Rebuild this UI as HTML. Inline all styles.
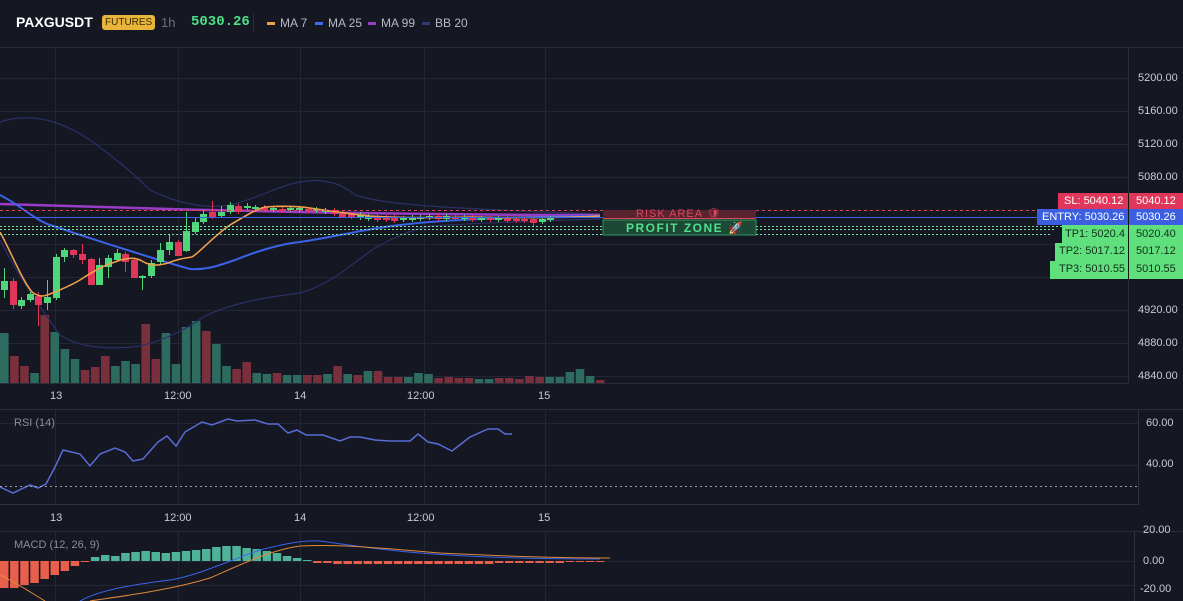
<!DOCTYPE html>
<html><head><meta charset="utf-8"><style>
html,body{margin:0;padding:0;background:#151722;width:1183px;height:601px;overflow:hidden;font-family:"Liberation Sans",sans-serif;}
.t{position:absolute;white-space:nowrap}
</style></head><body>
<div style="position:relative;width:1183px;height:601px">
<div class="t" style="left:16px;top:14px;color:#fff;font-weight:bold;font-size:14px">PAXGUSDT</div>
<div class="t" style="left:102px;top:15px;background:#e8b53a;color:#3a2a00;font-size:10px;padding:2px 3px;border-radius:3px">FUTURES</div>
<div class="t" style="left:161px;top:15px;color:#6b6f7c;font-size:13px">1h</div>
<div class="t" style="left:191px;top:14px;color:#4ee08a;font-weight:bold;font-size:14px;font-family:'Liberation Mono',monospace">5030.26</div>
<div class="t" style="left:253px;top:14px;width:1px;height:18px;background:#2a2e3a"></div>
<div class="t" style="left:267px;top:16px;color:#b6bac4;font-size:12px"><span style="display:inline-block;width:8px;height:3px;background:#f0a04b;vertical-align:middle;margin-right:5px"></span>MA 7</div>
<div class="t" style="left:315px;top:16px;color:#b6bac4;font-size:12px"><span style="display:inline-block;width:8px;height:3px;background:#3c6cf0;vertical-align:middle;margin-right:5px"></span>MA 25</div>
<div class="t" style="left:368px;top:16px;color:#b6bac4;font-size:12px"><span style="display:inline-block;width:8px;height:3px;background:#9a3cc8;vertical-align:middle;margin-right:5px"></span>MA 99</div>
<div class="t" style="left:422px;top:16px;color:#b6bac4;font-size:12px"><span style="display:inline-block;width:8px;height:3px;background:#2f3a7a;vertical-align:middle;margin-right:5px"></span>BB 20</div>

<svg id="s" width="1183" height="601" style="position:absolute;left:0;top:0" xmlns="http://www.w3.org/2000/svg">
<g stroke="#232633" stroke-width="1">
<line x1="0" y1="47.5" x2="1183" y2="47.5" stroke="#262a36"/>
<line x1="0" y1="78.5" x2="1128" y2="78.5"/><line x1="0" y1="111.5" x2="1128" y2="111.5"/><line x1="0" y1="144.5" x2="1128" y2="144.5"/><line x1="0" y1="177.5" x2="1128" y2="177.5"/>
<line x1="0" y1="244.5" x2="1128" y2="244.5"/><line x1="0" y1="277.5" x2="1128" y2="277.5"/><line x1="0" y1="310.5" x2="1128" y2="310.5"/><line x1="0" y1="343.5" x2="1128" y2="343.5"/><line x1="0" y1="376.5" x2="1128" y2="376.5"/>
<line x1="55.5" y1="48" x2="55.5" y2="383"/><line x1="178.5" y1="48" x2="178.5" y2="383"/><line x1="300.5" y1="48" x2="300.5" y2="383"/><line x1="424.5" y1="48" x2="424.5" y2="383"/><line x1="545.5" y1="48" x2="545.5" y2="383"/>
<line x1="1128.5" y1="48" x2="1128.5" y2="383" stroke="#2a2e3a"/>
<line x1="0" y1="383.5" x2="1128" y2="383.5" stroke="#2a2e3a"/>
<line x1="0" y1="409.5" x2="1183" y2="409.5" stroke="#2a2e3a"/>
<line x1="0" y1="423.5" x2="1138" y2="423.5"/><line x1="0" y1="465.5" x2="1138" y2="465.5"/>
<line x1="55.5" y1="410" x2="55.5" y2="505"/><line x1="178.5" y1="410" x2="178.5" y2="505"/><line x1="300.5" y1="410" x2="300.5" y2="505"/><line x1="424.5" y1="410" x2="424.5" y2="505"/><line x1="545.5" y1="410" x2="545.5" y2="505"/>
<line x1="1138.5" y1="410" x2="1138.5" y2="505" stroke="#2e323e"/>
<line x1="0" y1="504.5" x2="1138" y2="504.5" stroke="#2e323e"/>
<line x1="0" y1="531.5" x2="1183" y2="531.5" stroke="#2a2e3a"/>
<line x1="0" y1="561.5" x2="1134" y2="561.5"/><line x1="0" y1="585.5" x2="1134" y2="585.5"/>
<line x1="55.5" y1="532" x2="55.5" y2="601"/><line x1="178.5" y1="532" x2="178.5" y2="601"/><line x1="300.5" y1="532" x2="300.5" y2="601"/><line x1="424.5" y1="532" x2="424.5" y2="601"/><line x1="545.5" y1="532" x2="545.5" y2="601"/>
<line x1="1134.5" y1="532" x2="1134.5" y2="601" stroke="#2e323e"/>
</g>
<g id="vol"></g>
<g fill="none" stroke="#2a3166" stroke-width="1.2">
<path d="M0,122 C30,112 60,120 90,140 C115,158 135,175 150,190 C170,200 200,210 230,205 C260,198 280,185 300,182 C320,178 340,182 355,195 C380,203 420,206 480,209 C540,212 570,213 600,214"/>
<path d="M0,240 C15,270 35,300 60,335 C80,348 110,350 140,346 C165,340 185,330 205,316 C230,304 260,298 300,293 C330,285 350,265 375,248 C395,237 410,230 430,226 C500,222 560,220 600,219"/>
</g>
<path fill="none" stroke="#9a3cc8" stroke-width="2.5" d="M0,204 C80,207 200,210 300,212 C400,214 500,215 600,215"/>
<path fill="none" stroke="#3a63e8" stroke-width="2" d="M0,195 C20,205 35,220 50,225 C90,238 140,255 190,269 C205,270 215,267 235,260 C260,250 280,244 300,242 C340,236 370,228 400,225 C440,220 500,217 600,216"/>
<g id="cd"></g>
<path fill="none" stroke="#f0a04b" stroke-width="1.6" d="M0,232 C10,250 22,280 32,292 C40,298 45,296 50,294 C60,290 70,286 80,280 C95,270 105,265 115,262 C125,258 135,257 142,261 C150,266 158,266 168,263 C178,259 185,258 192,257 C200,252 215,235 230,225 C245,216 255,210 265,207 C280,206 295,206 310,208 C330,211 350,214 370,216 C400,218 430,218 470,217 C520,218 560,218 600,216"/>
<g stroke-width="1">
<line x1="0" y1="210.5" x2="1058" y2="210.5" stroke="#e0455e" stroke-dasharray="3,3"/>
<line x1="0" y1="217.5" x2="1037" y2="217.5" stroke="#3a63e8"/>
<line x1="0" y1="226.5" x2="1062" y2="226.5" stroke="#7be49a" stroke-dasharray="2,2"/>
<line x1="0" y1="229.5" x2="1055" y2="229.5" stroke="#7be49a" stroke-dasharray="2,2"/>
<line x1="0" y1="234.5" x2="1050" y2="234.5" stroke="#7be49a" stroke-dasharray="2,2"/>
</g>
<rect x="603" y="210" width="153" height="9" fill="#5a2330"/>
<line x1="603" y1="218.5" x2="756" y2="218.5" stroke="#e0455e"/>
<rect x="603" y="220" width="153" height="15" fill="#1e4836" stroke="#2f9a5d" stroke-width="1"/>
<path fill="none" stroke="#5a6dd6" stroke-width="1.5" d="M0,487 L13,493 L30,485 L38,488 L46,484 L55,467 L63,450 L80,454 L90,466 L100,454 L115,448 L125,452 L133,461 L143,459 L158,442 L167,436 L176,446 L185,432 L202,422 L212,425 L228,419 L237,421 L255,420 L268,424 L278,424 L288,433 L297,430 L306,435 L323,435 L340,441 L350,437 L360,437 L375,440 L390,441 L410,441 L418,434 L428,442 L438,444 L452,451 L470,437 L488,429 L498,429 L505,434 L512,434"/>
<line x1="0" y1="486.5" x2="1138" y2="486.5" stroke="#9aa0aa" stroke-dasharray="2,3"/>
<g id="mh"></g>
<path fill="none" stroke="#3a63e8" stroke-width="1" d="M80,601 C100,590 130,585 170,580 C200,575 230,560 260,550 C280,545 300,540 320,541 C350,545 380,550 420,553 C470,557 530,559 600,559"/>
<path fill="none" stroke="#e08a3a" stroke-width="1" d="M0,575 C15,582 30,592 45,601 M90,601 C130,595 170,590 210,578 C240,565 270,550 300,546 C340,544 380,548 440,553 C500,556 550,558 610,558"/>
</svg>

<div class="t" style="left:636px;top:209px;color:#e0455e;font-size:11px;letter-spacing:1px;line-height:11px">RISK AREA 🛡</div>
<div class="t" style="left:626px;top:221px;color:#4ee08a;font-size:12px;font-weight:bold;letter-spacing:1.5px">PROFIT ZONE 🚀</div>

<div class="t" style="left:1138px;top:72px;color:#c8ccd4;font-size:11px">5200.00</div>
<div class="t" style="left:1138px;top:105px;color:#c8ccd4;font-size:11px">5160.00</div>
<div class="t" style="left:1138px;top:138px;color:#c8ccd4;font-size:11px">5120.00</div>
<div class="t" style="left:1138px;top:171px;color:#c8ccd4;font-size:11px">5080.00</div>
<div class="t" style="left:1138px;top:304px;color:#c8ccd4;font-size:11px">4920.00</div>
<div class="t" style="left:1138px;top:337px;color:#c8ccd4;font-size:11px">4880.00</div>
<div class="t" style="left:1138px;top:370px;color:#c8ccd4;font-size:11px">4840.00</div>

<div class="t" style="left:1058px;top:193px;width:125px;height:16px;background:#e0365a"></div>
<div class="t" style="left:1064px;top:195px;color:#fff;font-size:11px">SL: 5040.12</div>
<div class="t" style="left:1136px;top:195px;color:#fff;font-size:11px">5040.12</div>
<div class="t" style="left:1037px;top:209px;width:146px;height:16px;background:#3b5fe0"></div>
<div class="t" style="left:1042px;top:211px;color:#fff;font-size:11px">ENTRY: 5030.26</div>
<div class="t" style="left:1136px;top:211px;color:#fff;font-size:11px">5030.26</div>
<div class="t" style="left:1062px;top:225px;width:121px;height:18px;background:#5fe07c"></div>
<div class="t" style="left:1065px;top:228px;color:#14301c;font-size:11px">TP1: 5020.4</div>
<div class="t" style="left:1136px;top:228px;color:#14301c;font-size:11px">5020.40</div>
<div class="t" style="left:1055px;top:243px;width:128px;height:18px;background:#5fe07c"></div>
<div class="t" style="left:1059px;top:245px;color:#14301c;font-size:11px">TP2: 5017.12</div>
<div class="t" style="left:1136px;top:245px;color:#14301c;font-size:11px">5017.12</div>
<div class="t" style="left:1050px;top:261px;width:133px;height:18px;background:#5fe07c"></div>
<div class="t" style="left:1059px;top:263px;color:#14301c;font-size:11px">TP3: 5010.55</div>
<div class="t" style="left:1136px;top:263px;color:#14301c;font-size:11px">5010.55</div>
<div class="t" style="left:1128px;top:193px;width:1px;height:86px;background:#0e1a10"></div>

<div class="t" style="left:50px;top:390px;color:#c8ccd4;font-size:11px">13</div>
<div class="t" style="left:164px;top:390px;color:#c8ccd4;font-size:11px">12:00</div>
<div class="t" style="left:294px;top:390px;color:#c8ccd4;font-size:11px">14</div>
<div class="t" style="left:407px;top:390px;color:#c8ccd4;font-size:11px">12:00</div>
<div class="t" style="left:538px;top:390px;color:#c8ccd4;font-size:11px">15</div>

<div class="t" style="left:14px;top:417px;color:#8a8e98;font-size:11px">RSI (14)</div>
<div class="t" style="left:1146px;top:417px;color:#c8ccd4;font-size:11px">60.00</div>
<div class="t" style="left:1146px;top:458px;color:#c8ccd4;font-size:11px">40.00</div>

<div class="t" style="left:50px;top:512px;color:#c8ccd4;font-size:11px">13</div>
<div class="t" style="left:164px;top:512px;color:#c8ccd4;font-size:11px">12:00</div>
<div class="t" style="left:294px;top:512px;color:#c8ccd4;font-size:11px">14</div>
<div class="t" style="left:407px;top:512px;color:#c8ccd4;font-size:11px">12:00</div>
<div class="t" style="left:538px;top:512px;color:#c8ccd4;font-size:11px">15</div>

<div class="t" style="left:14px;top:539px;color:#8a8e98;font-size:11px">MACD (12, 26, 9)</div>
<div class="t" style="left:1143px;top:524px;color:#c8ccd4;font-size:11px">20.00</div>
<div class="t" style="left:1143px;top:555px;color:#c8ccd4;font-size:11px">0.00</div>
<div class="t" style="left:1140px;top:583px;color:#c8ccd4;font-size:11px">-20.00</div>
</div>
<script>
var NS="http://www.w3.org/2000/svg";
function r(g,x,y,w,h,c){var e=document.createElementNS(NS,"rect");e.setAttribute("x",x);e.setAttribute("y",y);e.setAttribute("width",w);e.setAttribute("height",Math.max(h,1));e.setAttribute("fill",c);document.getElementById(g).appendChild(e);}
var vt=[333,356,366,373,315,332,349,359,370,367,356,366,361,364,324,359,333,364,327,321,331,344,366,369,362,373,374,373,375,375,375,375,374,366,374,375,371,371,377,377,377,373,374,378,377,378,378,379,379,378,378,379,376,377,377,377,372,369,376,380];
var vc="grrgrgggrrrgggrrggggrggrrggrggrrgrgrgrrrgggrrrrggrrrrrgggggrr";
for(var i=0;i<vt.length;i++){r("vol",i*10.1,vt[i],8.6,383-vt[i],vc[i]=="g"?"#2c6b5e":"#7a2f3c");}
var cd=[[4,281,290,268,298,1],[13,281,305,278,309,0],[21,300,306,297,309,1],[30,294,300,292,302,1],[38,296,305,292,326,0],[47,297,303,280,310,1],[56,257,298,254,300,1],[64,250,257,248,262,1],[73,250,255,249,258,0],[82,254,260,244,264,0],[91,259,285,258,285,0],[99,265,285,258,285,1],[108,258,267,255,278,1],[117,253,260,249,262,1],[125,254,262,252,272,0],[134,260,278,258,278,0],[142,276,278,275,290,1],[151,263,276,260,278,1],[160,250,262,243,265,1],[169,242,250,235,255,1],[178,242,256,240,256,0],[186,231,251,212,252,1],[195,222,232,218,234,1],[203,214,222,210,224,1],[212,212,218,201,219,0],[221,212,216,206,218,1],[230,205,212,202,214,1],[238,206,212,204,214,0],[247,206,208,203,211,1],[255,207,209,205,211,1],[264,207,210,205,212,0],[273,208,210,206,212,1],[282,209,211,207,213,0],[290,208,210,206,212,1],[299,208,210,206,212,1],[308,209,211,207,213,0],[316,209,211,207,213,1],[325,210,212,208,214,1],[334,210,214,208,216,0],[342,212,217,210,218,0],[351,214,217,212,219,0],[360,215,218,212,220,1],[368,216,219,214,221,1],[377,216,220,214,222,0],[386,217,220,215,222,0],[394,217,221,215,223,0],[403,218,220,216,222,1],[412,218,220,215,222,1],[420,217,219,215,221,1],[429,216,218,214,220,1],[438,216,219,214,221,0],[446,216,219,214,221,1],[455,217,219,215,221,0],[464,217,219,215,221,1],[472,217,220,215,222,0],[481,218,220,216,222,1],[490,218,220,216,222,0],[498,218,220,216,222,1],[507,218,221,216,223,0],[516,219,221,217,223,0],[524,219,221,217,223,0],[533,219,223,217,226,0],[542,219,222,217,224,1],[550,218,220,216,222,1]];
cd.forEach(function(c){var col=c[5]?"#4fd67a":"#e0365a";r("cd",c[0],c[3],1,c[4]-c[3],col);r("cd",c[0]-3,c[1],7,c[2]-c[1],col);});
var mh=[27,27,24,22,18,14,10,5,1,-4,-6,-5,-8,-9,-10,-9,-8,-9,-10,-11,-12,-14,-15,-15,-13,-12,-10,-8,-5,-3,-1,2,2,3,3,3,3,3,3,3,3,3,3,3,3,3,3,3,3,2,2,2,2,2,2,2,1,1,1,1];
for(var j=0;j<mh.length;j++){var h=mh[j];var x=j*10.1;if(x>600)break;if(h>0)r("mh",x,561,8.5,h,"#e8604c");else r("mh",x,561+h,8.5,-h,"#4fb39a");}
</script>
</body></html>
